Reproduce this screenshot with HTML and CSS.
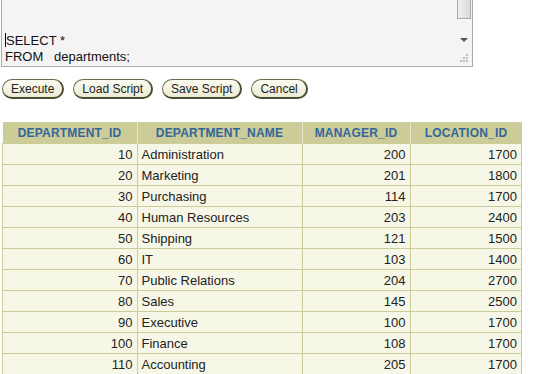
FILE: index.html
```html
<!DOCTYPE html>
<html lang="en">
<head>
    <meta charset="UTF-8">
    <title>SQL Workshop</title>
    <link rel="stylesheet" href="styles.css">
</head>
<body>
    <div class="editor">
        <div class="code">
            <div class="line"><span class="caret"></span>SELECT *</div>
            <div class="line">FROM&nbsp;&nbsp;&nbsp;departments;</div>
        </div>
        <div class="scrollbar">
            <div class="thumb"></div>
            <div class="arrow"></div>
            <svg class="grip" width="9" height="9" viewBox="0 0 9 9">
                <rect x="7" y="1" width="2" height="2" fill="#bbb"/>
                <rect x="4" y="4" width="2" height="2" fill="#bbb"/>
                <rect x="7" y="4" width="2" height="2" fill="#bbb"/>
                <rect x="1" y="7" width="2" height="2" fill="#bbb"/>
                <rect x="4" y="7" width="2" height="2" fill="#bbb"/>
                <rect x="7" y="7" width="2" height="2" fill="#bbb"/>
            </svg>
        </div>
    </div>

    <div class="buttons">
        <button class="btn">Execute</button>
        <button class="btn">Load Script</button>
        <button class="btn">Save Script</button>
        <button class="btn">Cancel</button>
    </div>

    <table class="results">
        <tr>
            <th class="c1">DEPARTMENT_ID</th>
            <th class="c2">DEPARTMENT_NAME</th>
            <th class="c3">MANAGER_ID</th>
            <th class="c4">LOCATION_ID</th>
        </tr>
        <tr><td class="num">10</td><td>Administration</td><td class="num">200</td><td class="num">1700</td></tr>
        <tr><td class="num">20</td><td>Marketing</td><td class="num">201</td><td class="num">1800</td></tr>
        <tr><td class="num">30</td><td>Purchasing</td><td class="num">114</td><td class="num">1700</td></tr>
        <tr><td class="num">40</td><td>Human Resources</td><td class="num">203</td><td class="num">2400</td></tr>
        <tr><td class="num">50</td><td>Shipping</td><td class="num">121</td><td class="num">1500</td></tr>
        <tr><td class="num">60</td><td>IT</td><td class="num">103</td><td class="num">1400</td></tr>
        <tr><td class="num">70</td><td>Public Relations</td><td class="num">204</td><td class="num">2700</td></tr>
        <tr><td class="num">80</td><td>Sales</td><td class="num">145</td><td class="num">2500</td></tr>
        <tr><td class="num">90</td><td>Executive</td><td class="num">100</td><td class="num">1700</td></tr>
        <tr><td class="num">100</td><td>Finance</td><td class="num">108</td><td class="num">1700</td></tr>
        <tr><td class="num">110</td><td>Accounting</td><td class="num">205</td><td class="num">1700</td></tr>
    </table>
</body>
</html>
```

FILE: styles.css
```css
body {
    margin: 0;
    font-family: "Liberation Sans", Arial, sans-serif;
    background: #fff;
}

.editor {
    display: flex;
    width: 470px;
    height: 66px;
    margin-left: 1px;
    border: 1px solid #a5acb5;
    border-top: none;
    background: #f4f4f4;
}

.code {
    flex: 1;
    padding: 33px 0 0 3px;
    font-size: 13px;
    line-height: 16px;
    color: #111;
}

.caret {
    display: inline-block;
    width: 1px;
    height: 14px;
    margin-bottom: -2px;
    background: #000;
}

.scrollbar {
    width: 17px;
    display: flex;
    flex-direction: column;
    align-items: center;
}

.thumb {
    width: 12px;
    height: 18px;
    border: 1px solid #a8a8a8;
    border-top: none;
    background: linear-gradient(to right, #f0f0f0, #dcdcdc);
}

.arrow {
    margin-top: 19px;
    width: 0;
    height: 0;
    border-left: 4px solid transparent;
    border-right: 4px solid transparent;
    border-top: 4px solid #555;
}

.grip {
    margin-top: 11px;
}

.buttons {
    display: flex;
    gap: 9px;
    padding: 12px 0 0 2px;
}

.btn {
    height: 20px;
    padding: 0 8px;
    font-family: "Liberation Sans", Arial, sans-serif;
    font-size: 12px;
    color: #222;
    background: linear-gradient(#fbfbf0, #ecebd6);
    border: 1px solid #6b6b4a;
    border-right: 2px solid #4c4c30;
    border-bottom: 2px solid #4c4c30;
    border-radius: 10px;
}

.results {
    margin: 23px 0 0 2px;
    border-collapse: collapse;
    font-size: 13px;
}

.results th {
    height: 20px;
    padding: 1px 6px 0;
    background: #cccc99;
    color: #336699;
    font-weight: bold;
    font-size: 12px;
    letter-spacing: 0.2px;
    border-left: 1px solid #e6e6cc;
}

.results th:first-child {
    border-left: none;
}

.c1 { width: 122px; }
.c2 { width: 152px; }
.c3 { width: 95px; }
.c4 { width: 99px; }

.results td {
    height: 20px;
    padding: 0 4px;
    background: #f7f7e7;
    color: #222;
    border: 1px solid #cccc99;
}

.results td.num {
    text-align: right;
}
```
